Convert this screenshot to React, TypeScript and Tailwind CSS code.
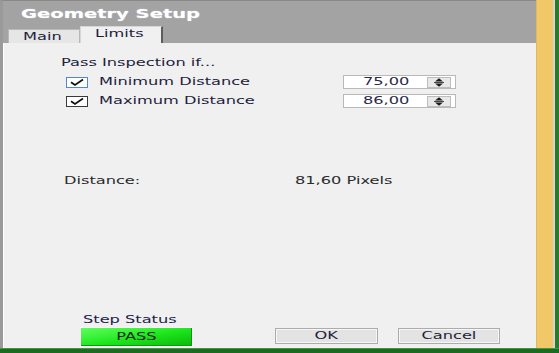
import type { ReactNode } from "react";
import clsx from "clsx";

// text in the source shot is stretched horizontally, so every label is widened
function Wide({ children, className }: { children: ReactNode; className?: string }) {
  return (
    <span className={clsx("inline-block whitespace-nowrap origin-left scale-x-[1.62]", className)}>
      {children}
    </span>
  );
}

function CheckBox({ focused }: { focused?: boolean }) {
  return (
    <svg width="22" height="11" viewBox="0 0 22 11" className="shrink-0">
      <rect x="0.5" y="0.5" width="21" height="10" fill="#ffffff" stroke={focused ? "#4f86d6" : "#3a3a3a"} />
      <path d="M5 5.2 L9 8 L17 2.6" fill="none" stroke="#111111" strokeWidth="1.8" />
    </svg>
  );
}

function SpinBox({ value }: { value: string }) {
  return (
    <div className="flex h-[14px] w-[113px] items-center border border-[#b9b9b9] bg-white">
      <div className="w-[19px]" />
      <div className="w-[47px] text-[10px] leading-[12px] text-[#2a2a4a]">
        <Wide>{value}</Wide>
      </div>
      <div className="flex-1" />
      <div className="mr-[4px] flex h-[11px] w-[24px] items-center justify-center border border-[#bdbdbd] bg-[#e8e8e8]">
        <svg width="12" height="9" viewBox="0 0 12 9">
          <path d="M6 0.3 L10 3.6 L2 3.6 Z" fill="#1a1a1a" />
          <path d="M1 4.5 H11" stroke="#1a1a1a" strokeWidth="0.8" />
          <path d="M6 8.7 L10 5.4 L2 5.4 Z" fill="#1a1a1a" />
        </svg>
      </div>
    </div>
  );
}

function Button({ label }: { label: string }) {
  return (
    <div className="flex h-[16px] items-center justify-center border border-[#acacac] bg-[#e3e3e3] shadow-[inset_0_0_0_1px_#f6f6f6]">
      <span className="inline-block origin-center scale-x-[1.62] text-[10px] leading-[12px] text-[#1e1e3c]">
        {label}
      </span>
    </div>
  );
}

export default function App() {
  return (
    <div className="flex h-[353px] w-[559px] flex-col bg-[#2a7a2e] font-['DejaVu_Sans',sans-serif]">
      <div className="flex h-[348px]">
        <div className="flex w-[536px] flex-col border-l-[3px] border-t border-l-[#9a9a9a] border-t-[#888888]">
          <div className="flex h-[42px] flex-col bg-[#a3a3a3]">
            <div className="h-[25px] pl-[18px] pt-[4px] text-[13px] font-bold leading-[18px] text-white">
              <span className="inline-block origin-left scale-x-[1.5] [text-shadow:0_0_1px_#d8d8e8]">
                Geometry Setup
              </span>
            </div>
            <div className="flex h-[17px] items-end pl-[5px]">
              <div className="flex h-[14px] w-[72px] items-center border border-b-0 border-[#b8b8b8] bg-[#e6e6e6] pl-[14px] text-[10px] leading-[12px] text-[#1e1e3c]">
                <Wide>Main</Wide>
              </div>
              <div className="flex h-[17px] w-[83px] items-start border-l border-r-2 border-t border-l-[#d6d6d6] border-r-[#5c5c5c] border-t-[#d6d6d6] bg-[#f0f0f0] pl-[14px] pt-[1px] text-[10px] leading-[12px] text-[#1e1e3c]">
                <Wide>Limits</Wide>
              </div>
            </div>
          </div>

          <div className="flex flex-1 flex-col border-l border-white bg-[#f0f0f0] text-[10px] leading-[14px] text-[#1e1e3c]">
            <div className="mt-[13px] pl-[57px]">
              <Wide>Pass Inspection if...</Wide>
            </div>

            <div className="mt-[5px] flex h-[14px] items-center pl-[62px]">
              <div className="flex w-[277px] items-center gap-[11px]">
                <CheckBox focused />
                <Wide>Minimum Distance</Wide>
              </div>
              <SpinBox value="75,00" />
            </div>

            <div className="mt-[5px] flex h-[14px] items-center pl-[62px]">
              <div className="flex w-[277px] items-center gap-[11px]">
                <CheckBox />
                <Wide>Maximum Distance</Wide>
              </div>
              <SpinBox value="86,00" />
            </div>

            <div className="mt-[66px] flex pl-[60px] text-[#2b2b2b]">
              <div className="w-[231px]">
                <Wide>Distance:</Wide>
              </div>
              <Wide>81,60 Pixels</Wide>
            </div>

            <div className="mt-auto mb-px flex items-end pl-[76px]">
              <div className="flex w-[113px] flex-col">
                <div className="pl-[3px]">
                  <Wide className="text-[#22224a]">Step Status</Wide>
                </div>
                <div className="flex h-[20px] items-center justify-center border border-[#f8f8f8] bg-gradient-to-br from-[#58ff58] via-[#1ee81e] to-[#08b808] shadow-[inset_-1px_-1px_0_#0a9a0a]">
                  <span className="inline-block origin-center scale-x-[1.62] text-[10px] leading-[12px] text-[#0c2a0c]">
                    PASS
                  </span>
                </div>
              </div>
              <div className="mb-[3px] ml-[82px] w-[103px]">
                <Button label="OK" />
              </div>
              <div className="mb-[3px] ml-[20px] w-[102px]">
                <Button label="Cancel" />
              </div>
            </div>
          </div>
        </div>
        <div className="w-[17px] border-l border-[#e2b85a] bg-[#f0c868]" />
        <div className="w-[2px] bg-[#d4d4d4]" />
        <div className="flex-1 bg-[#2a7a2e]" />
      </div>
      <div className="h-px bg-[#3d9a3d]" />
      <div className="flex-1 bg-[#1f6a23]" />
    </div>
  );
}
